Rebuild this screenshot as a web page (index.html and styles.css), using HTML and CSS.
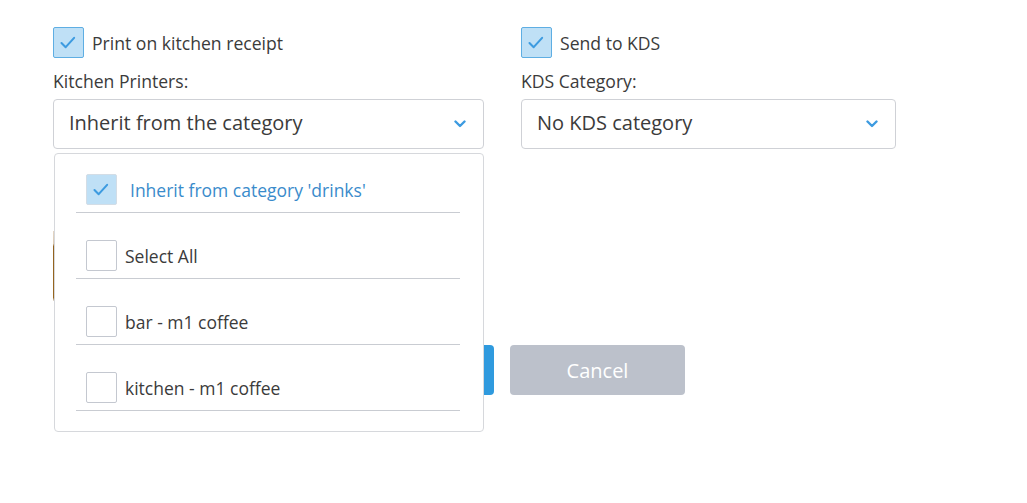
FILE: index.html
```html
<!DOCTYPE html>
<html>
<head>
<meta charset="utf-8">
<link rel="stylesheet" href="styles.css">
</head>
<body>
<div class="page">
  <div class="columns">
    <div class="col col-left">
      <label class="check-row">
        <span class="box box-on"><svg viewBox="0 0 31 31" width="29" height="29"><path d="M8 16 L12.5 20.5 L21.5 10.5" fill="none" stroke="#3d9be0" stroke-width="2.2" stroke-linecap="round" stroke-linejoin="round"/></svg></span>
        <span class="check-text">Print on kitchen receipt</span>
      </label>
      <div class="field-label">Kitchen Printers:</div>
      <div class="select">
        <span>Inherit from the category</span>
        <svg class="chev" viewBox="0 0 12 8" width="12" height="8"><path d="M1.5 1.5 L6 6 L10.5 1.5" fill="none" stroke="#3d9be0" stroke-width="2.4" stroke-linecap="round" stroke-linejoin="round"/></svg>
      </div>
      <div class="under-line"></div>
      <div class="buttons">
        <button class="btn btn-save">Save</button>
        <button class="btn btn-cancel">Cancel</button>
      </div>

      <div class="dropdown">
        <div class="item item-first">
          <span class="box box-soft"><svg viewBox="0 0 31 31" width="29" height="29"><path d="M8 16 L12.5 20.5 L21.5 10.5" fill="none" stroke="#3d9be0" stroke-width="2.2" stroke-linecap="round" stroke-linejoin="round"/></svg></span>
          <span class="item-text item-text-blue">Inherit from category 'drinks'</span>
        </div>
        <div class="item">
          <span class="box"></span>
          <span class="item-text">Select All</span>
        </div>
        <div class="item">
          <span class="box"></span>
          <span class="item-text">bar - m1 coffee</span>
        </div>
        <div class="item">
          <span class="box"></span>
          <span class="item-text">kitchen - m1 coffee</span>
        </div>
      </div>
    </div>
    <div class="col col-right">
      <label class="check-row">
        <span class="box box-on"><svg viewBox="0 0 31 31" width="29" height="29"><path d="M8 16 L12.5 20.5 L21.5 10.5" fill="none" stroke="#3d9be0" stroke-width="2.2" stroke-linecap="round" stroke-linejoin="round"/></svg></span>
        <span class="check-text">Send to KDS</span>
      </label>
      <div class="field-label">KDS Category:</div>
      <div class="select select-kds">
        <span>No KDS category</span>
        <svg class="chev" viewBox="0 0 12 8" width="12" height="8"><path d="M1.5 1.5 L6 6 L10.5 1.5" fill="none" stroke="#3d9be0" stroke-width="2.4" stroke-linecap="round" stroke-linejoin="round"/></svg>
      </div>
    </div>
  </div>
</div>
</body>
</html>
```

FILE: styles.css
```css
* { box-sizing: border-box; }
html, body { margin: 0; padding: 0; background: #fff; }
body {
  font-family: "Open Sans", "Noto Sans", sans-serif;
  color: #3b3b3b;
  width: 1027px;
  height: 503px;
  overflow: hidden;
}
.page {
  padding: 27px 0 0 53px;
}
.columns {
  display: flex;
  gap: 37px;
}
.col { position: relative; }
.col-left { width: 431px; }
.col-right { width: 375px; }

.check-row {
  display: flex;
  align-items: center;
  gap: 8px;
  height: 31px;
}
.box {
  width: 31px;
  height: 31px;
  flex: none;
  border: 1px solid #c4c8d0;
  border-radius: 2px;
  background: #fff;
  display: flex;
  align-items: center;
  justify-content: center;
}
.box-on {
  background: #bfe0f6;
  border-color: #5eaee3;
}
.box-soft {
  background: #bfe0f6;
  border-color: #d3dde6;
}
.check-text {
  font-size: 17.6px;
  line-height: 22px;
  color: #3b3b3b;
}
.field-label {
  margin-top: 12px;
  font-size: 17.6px;
  line-height: 22px;
  color: #3b3b3b;
}
.select {
  margin-top: 7px;
  height: 50px;
  border: 1px solid #cfd1d6;
  border-radius: 4px;
  display: flex;
  align-items: center;
  justify-content: space-between;
  padding: 0 17px 3px 15px;
  font-size: 20px;
  color: #3b3b3b;
}
.chev { flex: none; margin-top: 3px; }

.under-line {
  margin-top: 82px;
  margin-left: 0;
  width: 1px;
  height: 70px;
  background: linear-gradient(#e3d6c6 0%, #dcc9b2 18%, #93621f 22%, #97661f 95%, #e6e2de 100%);
}
.buttons {
  margin-top: 44px;
  display: flex;
  gap: 16px;
  padding-left: 266px;
}
.btn {
  width: 175px;
  height: 50px;
  border: none;
  border-radius: 4px;
  font-family: "Open Sans", "Noto Sans", sans-serif;
  font-size: 20px;
  color: #fff;
  flex: none;
}
.btn-save { background: #2f9ade; }
.btn-cancel { background: #bcc1cb; }

.dropdown {
  position: absolute;
  top: 126px;
  left: 1px;
  width: 430px;
  background: #fff;
  border: 1px solid #d6d8dc;
  border-radius: 4px;
  padding: 0 23px 20px 21px;
}
.item {
  display: flex;
  align-items: center;
  gap: 8px;
  padding: 27px 0 7px 10px;
  border-bottom: 1px solid #c9ccd2;
}
.item-first {
  padding-top: 20px;
  gap: 13px;
}
.item-text {
  font-size: 17.5px;
  line-height: 22px;
  color: #3b3b3b;
}
.item-text-blue { color: #3a8bcb; }
```
